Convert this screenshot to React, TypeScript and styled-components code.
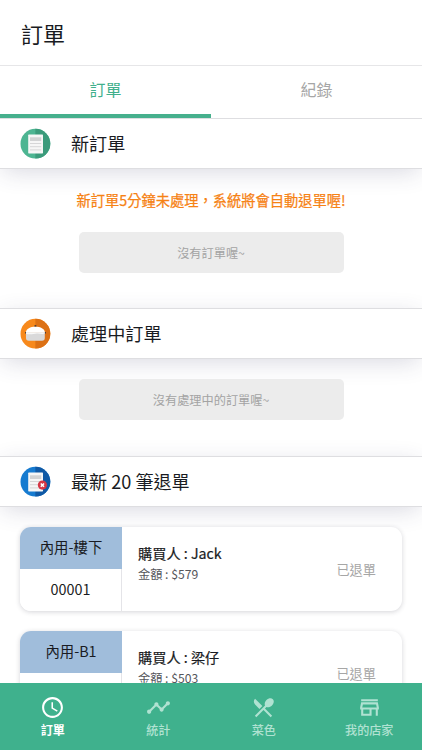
import React from "react";
import styled, { createGlobalStyle } from "styled-components";
import { MdAccessTime, MdTimeline, MdRestaurantMenu, MdOutlineStore } from "react-icons/md";

const GlobalStyle = createGlobalStyle`
  * { box-sizing: border-box; }
  body {
    margin: 0;
    background: #fff;
    color: #191b22;
    font-family: "Noto Sans CJK TC", "Noto Sans", sans-serif;
  }
`;

const Screen = styled.div`
  display: flex;
  flex-direction: column;
  height: 750px;
  overflow: hidden;
`;

const Header = styled.header`
  flex: none;
  height: 66px;
  padding: 1px 21px 0;
  display: flex;
  align-items: center;
  border-bottom: 1px solid #e6e6e8;
  font-size: 22px;
`;

const Tabs = styled.nav`
  flex: none;
  display: grid;
  grid-template-columns: 1fr 1fr;
  height: 52px;
`;

const Tab = styled.div<{ $active?: boolean }>`
  display: flex;
  align-items: center;
  justify-content: center;
  padding-bottom: ${(p) => (p.$active ? 2 : 6)}px;
  font-size: 16px;
  color: ${(p) => (p.$active ? "#40b08c" : "#a6a6a6")};
  border-bottom: ${(p) => (p.$active ? "4px solid #46b08d" : "0")};
`;

const Content = styled.main`
  flex: 1;
  min-height: 0;
  overflow: hidden;
`;

const SectionHeader = styled.h2`
  margin: 0;
  height: 51px;
  padding: 0 20px;
  display: flex;
  align-items: center;
  gap: 20px;
  background: #fff;
  border-top: 1px solid #dedee1;
  border-bottom: 1px solid #dedee1;
  box-shadow: 0 5px 24px -3px rgba(50, 50, 95, 0.2);
  font-size: 18.1px;
  font-weight: 400;

  svg { flex: none; }
`;

const SectionTitle = styled.span`
  margin-top: -2px;
`;

const SectionBody = styled.div<{ $height: number }>`
  height: ${(p) => p.$height}px;
  display: flex;
  flex-direction: column;
  align-items: center;
`;

const Notice = styled.p`
  margin: 20px 0 20px;
  height: 23px;
  line-height: 22px;
  font-size: 14.25px;
  color: #f68214;
  -webkit-text-stroke: 0.25px currentColor;
  white-space: nowrap;
`;

const Empty = styled.div<{ $offset?: number }>`
  margin-top: ${(p) => p.$offset ?? 0}px;
  width: 265px;
  height: 41px;
  display: flex;
  align-items: center;
  justify-content: center;
  border-radius: 5px;
  background: #ececec;
  color: #a3a3a3;
  font-size: 12.2px;
`;

const OrderList = styled.div`
  position: relative;
  display: flex;
  flex-direction: column;
  gap: 20px;
  padding: 20px 20px 0;
`;

const OrderCard = styled.article`
  flex: none;
  height: 84px;
  display: grid;
  grid-template-columns: 102px 1fr auto;
  overflow: hidden;
  border-radius: 11px;
  background: #fff;
  box-shadow: 0 1px 5px rgba(40, 40, 60, 0.2);
`;

const OrderKey = styled.div`
  display: grid;
  grid-template-rows: 42px 42px;
  border-right: 1px solid #e4e4e8;
  font-size: 14.4px;
`;

const KeyCell = styled.div<{ $tinted?: boolean }>`
  display: flex;
  align-items: center;
  justify-content: center;
  padding-bottom: 3px;
  margin-right: ${(p) => (p.$tinted ? -1 : 0)}px;
  background: ${(p) => (p.$tinted ? "#a0bddb" : "#fff")};
`;

const OrderInfo = styled.div`
  padding: 16px 0 0 16px;
`;

const Buyer = styled.div`
  height: 21px;
  line-height: 20px;
  font-size: 14.2px;
  -webkit-text-stroke: 0.2px currentColor;
`;

const Amount = styled.div`
  height: 20px;
  line-height: 20px;
  font-size: 12.2px;
  color: #55565b;
`;

const Status = styled.div`
  padding: 1px 26px 0 0;
  align-self: center;
  font-size: 13.2px;
  color: #a6a6a6;
`;

const BottomNav = styled.nav`
  position: relative;
  flex: none;
  height: 67px;
  display: grid;
  grid-template-columns: repeat(4, 1fr);
  background: #3fb18d;
`;

const NavItem = styled.div<{ $active?: boolean }>`
  display: flex;
  flex-direction: column;
  align-items: center;
  padding-top: 12px;
  color: ${(p) => (p.$active ? "#fff" : "#b0e2d2")};
  font-size: 12.1px;
  font-weight: ${(p) => (p.$active ? 700 : 500)};
  line-height: 18px;

  svg { flex: none; margin-bottom: 1px; }
`;

type BadgeKind = "new" | "cooking" | "returned";

const badgeColors: Record<BadgeKind, [string, string]> = {
  new: ["#4db592", "#3b9b7b"],
  cooking: ["#f7891c", "#dc7115"],
  returned: ["#167bd0", "#1059a5"],
};

function SectionBadge({ kind }: { kind: BadgeKind }) {
  const [light, dark] = badgeColors[kind];
  return (
    <svg width="31" height="31" viewBox="0 0 31 31">
      <circle cx="15.4" cy="15.7" r="14.9" fill={light} />
      <path d="M15.4 .8a14.9 14.9 0 0 1 0 29.8z" fill={dark} />
      {kind === "cooking" ? (
        <>
          <circle cx="15.4" cy="8" r="1.1" fill="#4d3c34" />
          <path d="M5 14h2v1.5H5zM24 14h2v1.5h-2z" fill="#4d3c34" />
          <path d="M5.8 14.3c.8-3.8 4.2-5.6 9.6-5.6s8.8 1.8 9.6 5.6z" fill="#fff" />
          <path d="M6 14.3h18.8v5.7q0 2.8-2.8 2.8H8.8Q6 22.8 6 20z" fill="#d9d9da" />
          <path d="M6 14.2h18.8v1.3c-3 1-5-.3-8 0s-7 1.5-10.8.2z" fill="#f8f8f8" />
        </>
      ) : (
        <>
          <rect x="8.2" y="6.5" width="14.8" height="19" rx=".7" fill="#f6f6f6" />
          <rect x="10" y="9.3" width="11.2" height="3.7" fill="#d2d3d4" />
          <path d="M10 15.5h11.2M10 18.7h11.2M10 21.9h11.2" stroke="#d2d3d4" strokeWidth=".9" />
        </>
      )}
      {kind === "returned" && (
        <>
          <circle cx="22.4" cy="19.1" r="4.6" fill="#d63746" />
          <path d="m20.8 17.5 3.2 3.2m0-3.2-3.2 3.2" stroke="#fff" strokeWidth="1.6" />
        </>
      )}
    </svg>
  );
}

const orders = [
  { place: "內用-樓下", number: "00001", buyer: "Jack", amount: 579 },
  { place: "內用-B1", number: "", buyer: "梁仔", amount: 503 },
];

const navItems = [
  { label: "訂單", Icon: MdAccessTime },
  { label: "統計", Icon: MdTimeline },
  { label: "菜色", Icon: MdRestaurantMenu },
  { label: "我的店家", Icon: MdOutlineStore },
];

export default function App() {
  return (
    <>
      <GlobalStyle />
      <Screen>
        <Header>訂單</Header>
        <Tabs>
          <Tab $active>訂單</Tab>
          <Tab>紀錄</Tab>
        </Tabs>
        <Content>
          <SectionHeader><SectionBadge kind="new" /><SectionTitle>新訂單</SectionTitle></SectionHeader>
          <SectionBody $height={139}>
            <Notice>新訂單5分鐘未處理，系統將會自動退單喔!</Notice>
            <Empty>沒有訂單喔~</Empty>
          </SectionBody>
          <SectionHeader><SectionBadge kind="cooking" /><SectionTitle>處理中訂單</SectionTitle></SectionHeader>
          <SectionBody $height={97}>
            <Empty $offset={20}>沒有處理中的訂單喔~</Empty>
          </SectionBody>
          <SectionHeader><SectionBadge kind="returned" /><SectionTitle>最新 20 筆退單</SectionTitle></SectionHeader>
          <OrderList>
            {orders.map((order) => (
              <OrderCard key={order.place}>
                <OrderKey>
                  <KeyCell $tinted>{order.place}</KeyCell>
                  <KeyCell>{order.number}</KeyCell>
                </OrderKey>
                <OrderInfo>
                  <Buyer>購買人 : {order.buyer}</Buyer>
                  <Amount>金額 : ${order.amount}</Amount>
                </OrderInfo>
                <Status>已退單</Status>
              </OrderCard>
            ))}
          </OrderList>
        </Content>
        <BottomNav>
          {navItems.map(({ label, Icon }, index) => (
            <NavItem key={label} $active={index === 0}>
              <Icon size={25} />
              {label}
            </NavItem>
          ))}
        </BottomNav>
      </Screen>
    </>
  );
}
